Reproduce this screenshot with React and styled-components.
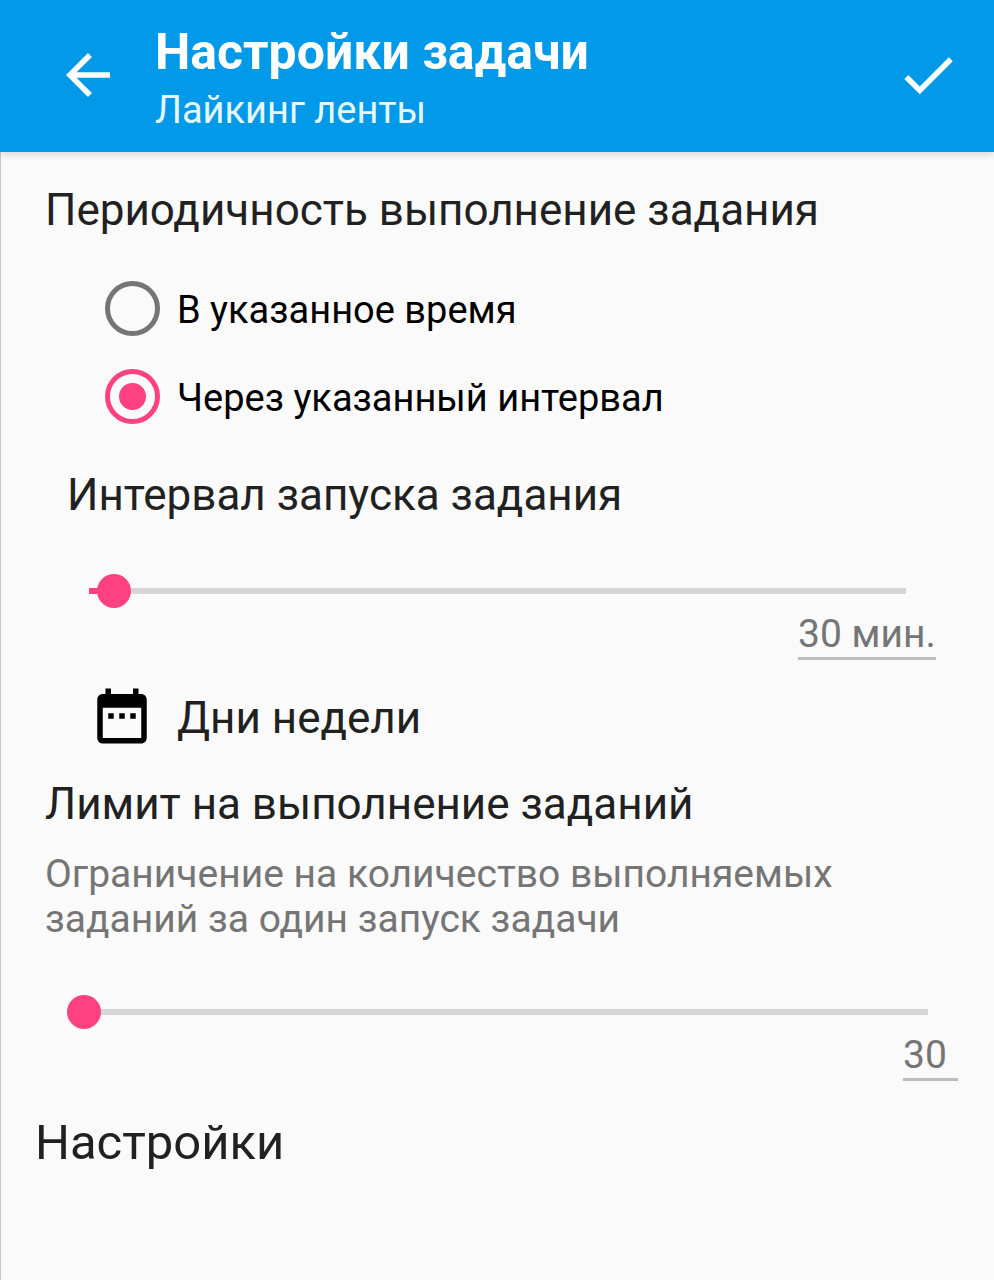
import React, { useState } from "react";
import styled, { createGlobalStyle } from "styled-components";
import { MdArrowBack, MdCheck, MdDateRange } from "react-icons/md";

const PINK = "#ff4081";

const GlobalStyle = createGlobalStyle`
  *, *::before, *::after {
    box-sizing: border-box;
  }

  body {
    margin: 0;
    background: #fafafa;
    color: #212121;
    font-family: Roboto, "Noto Sans", sans-serif;
  }

  h1, h2, p {
    margin: 0;
    font-weight: 400;
  }

  button, input {
    margin: 0;
    padding: 0;
    border: 0;
    background: none;
    font: inherit;
    color: inherit;
  }
`;

const Screen = styled.div`
  min-height: 100vh;
  padding-bottom: 32px;
  border-left: 1px solid #c8c8c8;
`;

const AppBar = styled.header`
  display: flex;
  align-items: center;
  height: 152px;
  margin-left: -1px;
  padding: 0 33px 2px 55px;
  background: #0299e9;
  color: #fff;
  box-shadow: 0 2px 8px rgba(0, 0, 0, 0.16);
`;

const IconButton = styled.button`
  display: flex;
  flex: none;
  cursor: pointer;
`;

const Titles = styled.div`
  flex: 1;
  min-width: 0;
  margin-left: 34px;
  padding-top: 10px;
`;

const Title = styled.h1`
  && {
    font-size: 50px;
    line-height: 60px;
    font-weight: 700;
  }
`;

const Subtitle = styled.p`
  font-size: 38px;
  line-height: 56px;
  color: #e6f8ff;
`;

const Section = styled.section`
  padding: 0 36px 0 44px;
  margin-top: ${props => props.$top}px;
`;

const Nested = styled.div`
  padding: 0 22px;
`;

const Heading = styled.h2`
  font-size: 44px;
  line-height: 52px;
`;

const LargeHeading = styled.h2`
  margin: 33px 34px 0;
  font-size: 49px;
  line-height: 58px;
`;

const Description = styled.p`
  margin-top: 22px;
  max-width: 820px;
  font-size: 39px;
  line-height: 45px;
  color: #757575;
`;

const RadioGroup = styled.div`
  margin: 28px 0 29px;
  padding-left: 60px;
`;

const RadioRow = styled.label`
  display: flex;
  align-items: center;
  gap: 17px;
  height: 88px;
  font-size: 38px;
  color: #000;
  cursor: pointer;
`;

const RowText = styled.span`
  padding-top: 4px;
`;

const Radio = styled.input.attrs({ type: "radio" })`
  appearance: none;
  flex: none;
  width: 55px;
  height: 55px;
  border: 5px solid #757575;
  border-radius: 50%;

  &:checked {
    border-color: ${PINK};
    background: radial-gradient(circle, ${PINK} 13px, transparent 14px);
  }
`;

const SliderBox = styled.div`
  margin-top: 51px;
  padding: 0 30px 0 22px;
`;

const Slider = styled.input.attrs({ type: "range" })`
  appearance: none;
  display: block;
  width: 100%;
  height: 38px;
  background: linear-gradient(${PINK}, ${PINK}) left center no-repeat,
    linear-gradient(#d6d6d6, #d6d6d6) left center no-repeat;
  background-size: ${props => props.$fill}% 6px, 100% 6px;

  &::-webkit-slider-thumb {
    appearance: none;
    width: 34px;
    height: 34px;
    border-radius: 50%;
    background: ${PINK};
  }
`;

const ValueInput = styled.input.attrs({ type: "text" })`
  display: block;
  width: ${props => props.$width}px;
  height: 50px;
  margin-left: auto;
  border-bottom: 3px solid #bdbdbd;
  font-size: 39px;
  line-height: 46px;
  color: #757575;
`;

const DaysButton = styled.button`
  display: flex;
  align-items: center;
  gap: 22px;
  margin: 23px 0 0 44px;
  font-size: 44px;
  line-height: 52px;
  cursor: pointer;

  svg {
    color: #000;
  }
`;

const SliderField = ({ label, min, max, value, unit, width, onChange }) => (
  <>
    <SliderBox>
      <Slider
        aria-label={label}
        min={min}
        max={max}
        value={value}
        $fill={((value - min) / (max - min)) * 100}
        onChange={e => onChange(Number(e.target.value))}
      />
    </SliderBox>
    <ValueInput
      aria-label={label}
      $width={width}
      value={`${value}${unit}`}
      onChange={e => onChange(parseInt(e.target.value, 10) || min)}
    />
  </>
);

const App = () => {
  const [mode, setMode] = useState("interval");
  const [interval, setInterval] = useState(30);
  const [limit, setLimit] = useState(30);

  return (
    <Screen>
      <GlobalStyle />
      <AppBar>
        <IconButton aria-label="Назад">
          <MdArrowBack size={66} />
        </IconButton>
        <Titles>
          <Title>Настройки задачи</Title>
          <Subtitle>Лайкинг ленты</Subtitle>
        </Titles>
        <IconButton aria-label="Сохранить">
          <MdCheck size={66} />
        </IconButton>
      </AppBar>

      <Section $top={32}>
        <Heading>Периодичность выполнение задания</Heading>
        <RadioGroup role="radiogroup">
          <RadioRow>
            <Radio
              name="mode"
              checked={mode === "time"}
              onChange={() => setMode("time")}
            />
            <RowText>В указанное время</RowText>
          </RadioRow>
          <RadioRow>
            <Radio
              name="mode"
              checked={mode === "interval"}
              onChange={() => setMode("interval")}
            />
            <RowText>Через указанный интервал</RowText>
          </RadioRow>
        </RadioGroup>
        <Nested>
          <Heading>Интервал запуска задания</Heading>
          <SliderField
            label="Интервал запуска задания"
            min={15}
            max={1440}
            value={interval}
            unit=" мин."
            width={138}
            onChange={setInterval}
          />
        </Nested>
        <DaysButton>
          <MdDateRange size={66} />
          <RowText>Дни недели</RowText>
        </DaysButton>
      </Section>

      <Section $top={29}>
        <Heading>Лимит на выполнение заданий</Heading>
        <Description>
          Ограничение на количество выполняемых заданий за один запуск задачи
        </Description>
        <SliderField
          label="Лимит на выполнение заданий"
          min={30}
          max={1000}
          value={limit}
          unit=""
          width={55}
          onChange={setLimit}
        />
      </Section>

      <LargeHeading>Настройки</LargeHeading>
    </Screen>
  );
};

export default App;
